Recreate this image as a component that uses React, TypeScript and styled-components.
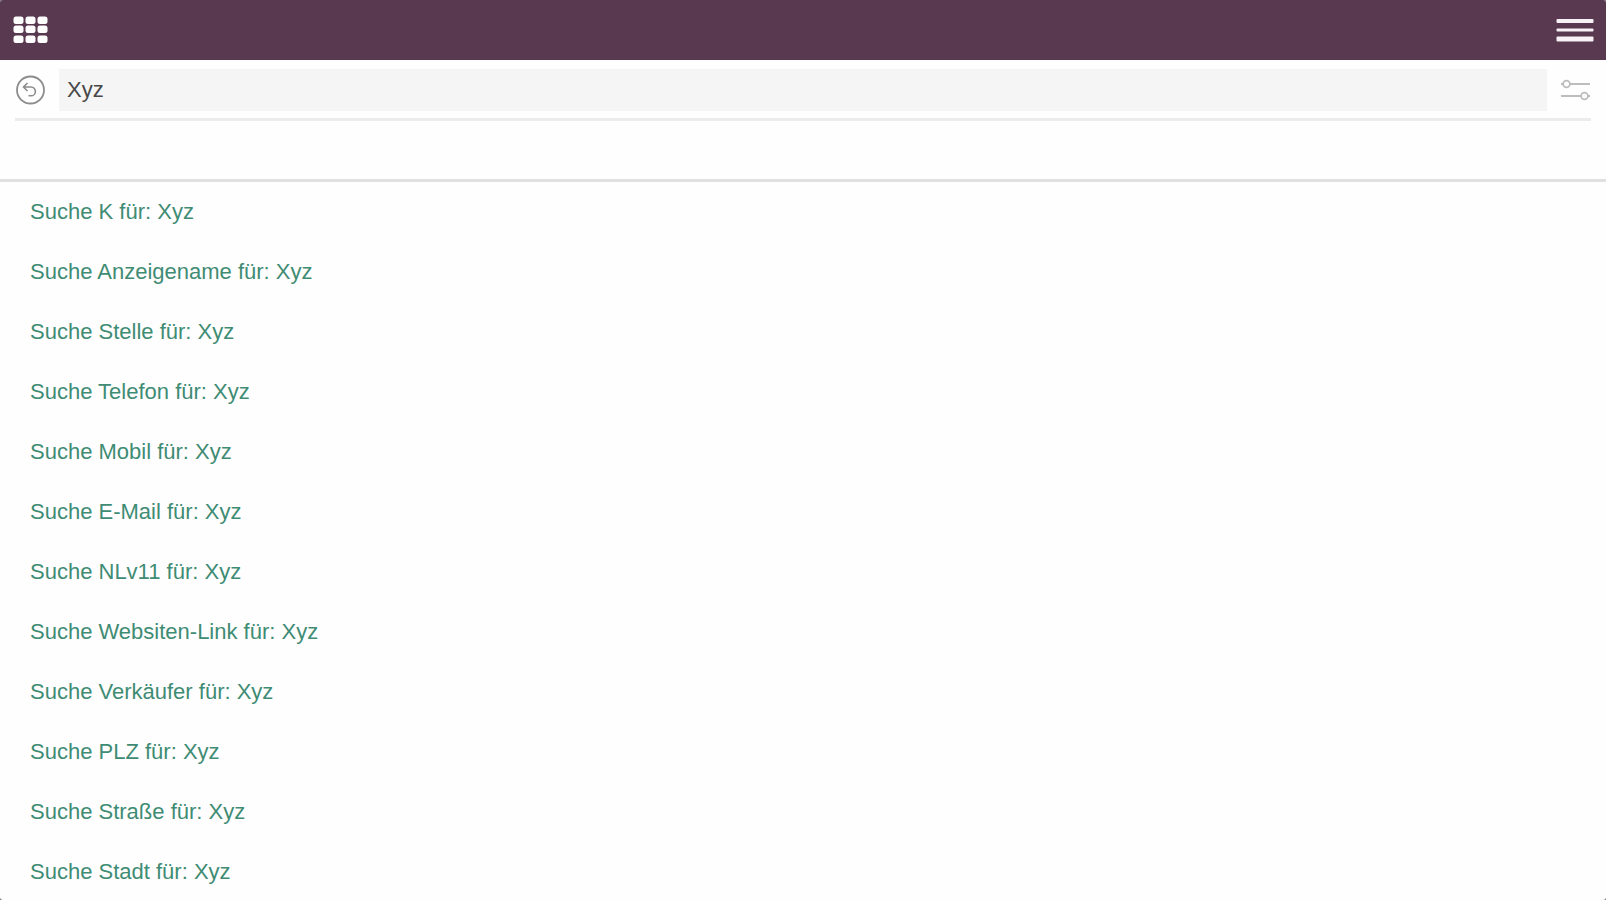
import React, { useState } from 'react';
import styled, { createGlobalStyle } from 'styled-components';

const GlobalStyle = createGlobalStyle`
  *, *::before, *::after { box-sizing: border-box; }
  body {
    margin: 0;
    background: #777;
    font-family: "Liberation Sans", Arial, sans-serif;
    font-size: 22px;
  }
`;

const Page = styled.div`
  display: flex;
  flex-direction: column;
  height: 100vh;
  overflow: hidden;
  background: #fefefe;
  border-radius: 3px;
`;

const TopBar = styled.header`
  display: flex;
  flex: none;
  align-items: center;
  justify-content: space-between;
  height: 60px;
  padding: 0 12px;
  background: #59394f;
`;

const IconButton = styled.button<{ $color: string }>`
  display: flex;
  flex: none;
  align-items: center;
  justify-content: center;
  padding: 0;
  border: 0;
  background: none;
  color: ${({ $color }) => $color};
  cursor: pointer;

  svg { display: block; }
`;

const SearchForm = styled.form`
  display: flex;
  flex: none;
  align-items: center;
  gap: 14px;
  height: 61px;
  margin: 0 15px;
  padding-top: 2px;
  border-bottom: 3px solid #ececec;
`;

const SearchInput = styled.input`
  flex: 1;
  min-width: 0;
  height: 42px;
  padding: 0 8px;
  border: 0;
  outline: 0;
  background: #f5f5f5;
  color: #484848;
  font: inherit;
`;

const Facets = styled.div`
  flex: none;
  height: 61px;
  border-bottom: 3px solid #e0e0e0;
`;

const Suggestions = styled.ul`
  flex: 1;
  min-height: 0;
  margin: 0;
  padding: 0;
  overflow-y: auto;
  list-style: none;
  scrollbar-width: none;
`;

const Suggestion = styled.a`
  display: block;
  padding: 0 30px;
  color: #3f8c74;
  line-height: 60px;
  text-decoration: none;
`;

const AppsIcon = () => (
  <svg width="36" height="28" viewBox="0 0 36 28" fill="#fff" aria-hidden="true">
    {[0.5, 9.5, 19.5].map((y) =>
      [1.5, 13.5, 25.5].map((x) => (
        <rect key={`${x}-${y}`} x={x} y={y} width="10" height="7.5" rx="2.5" />
      )),
    )}
  </svg>
);

const MenuIcon = () => (
  <svg width="38" height="24" viewBox="0 0 38 24" fill="#f8f1f6" aria-hidden="true">
    <rect x="0.5" y="1" width="37" height="4" rx="1" />
    <rect x="0.5" y="10.5" width="37" height="3" rx="1" />
    <rect x="0.5" y="18.5" width="37" height="5" rx="1" />
  </svg>
);

const ResetIcon = () => (
  <svg width="30" height="30" viewBox="0 0 30 30" fill="none" stroke="currentColor" aria-hidden="true">
    <circle cx="15.5" cy="15" r="13.5" strokeWidth="1.8" />
    <path d="M12.5 8 8.5 12l4 4M8.5 12h7.5a4.4 4.4 0 0 1 0 8.8h-2.5" strokeWidth="1.6" />
  </svg>
);

const FilterIcon = () => (
  <svg width="30" height="22" viewBox="0 0 30 22" fill="none" stroke="currentColor" strokeWidth="1.8" aria-hidden="true">
    <path d="M0 5h2M9 5h20M0 17h20M27 17h2" />
    <circle cx="5.5" cy="5" r="3.4" />
    <circle cx="23.5" cy="17" r="3.4" />
  </svg>
);

const fields = [
  'K', 'Anzeigename', 'Stelle', 'Telefon', 'Mobil', 'E-Mail',
  'NLv11', 'Websiten-Link', 'Verkäufer', 'PLZ', 'Straße', 'Stadt',
];

export default function App() {
  const [query, setQuery] = useState('Xyz');

  return (
    <>
      <GlobalStyle />
      <Page>
        <TopBar>
          <IconButton type="button" $color="#fff" aria-label="Apps"><AppsIcon /></IconButton>
          <IconButton type="button" $color="#fff" aria-label="Menü"><MenuIcon /></IconButton>
        </TopBar>
        <SearchForm role="search" onSubmit={(event) => event.preventDefault()}>
          <IconButton type="button" $color="#8c8c8c" aria-label="Zurücksetzen" onClick={() => setQuery('')}>
            <ResetIcon />
          </IconButton>
          <SearchInput
            type="text"
            aria-label="Suche"
            value={query}
            onChange={(event) => setQuery(event.target.value)}
          />
          <IconButton type="button" $color="#bdbdbd" aria-label="Filter"><FilterIcon /></IconButton>
        </SearchForm>
        <Facets />
        <Suggestions>
          {fields.map((field) => (
            <li key={field}>
              <Suggestion href="#">Suche {field} für: {query}</Suggestion>
            </li>
          ))}
        </Suggestions>
      </Page>
    </>
  );
}
